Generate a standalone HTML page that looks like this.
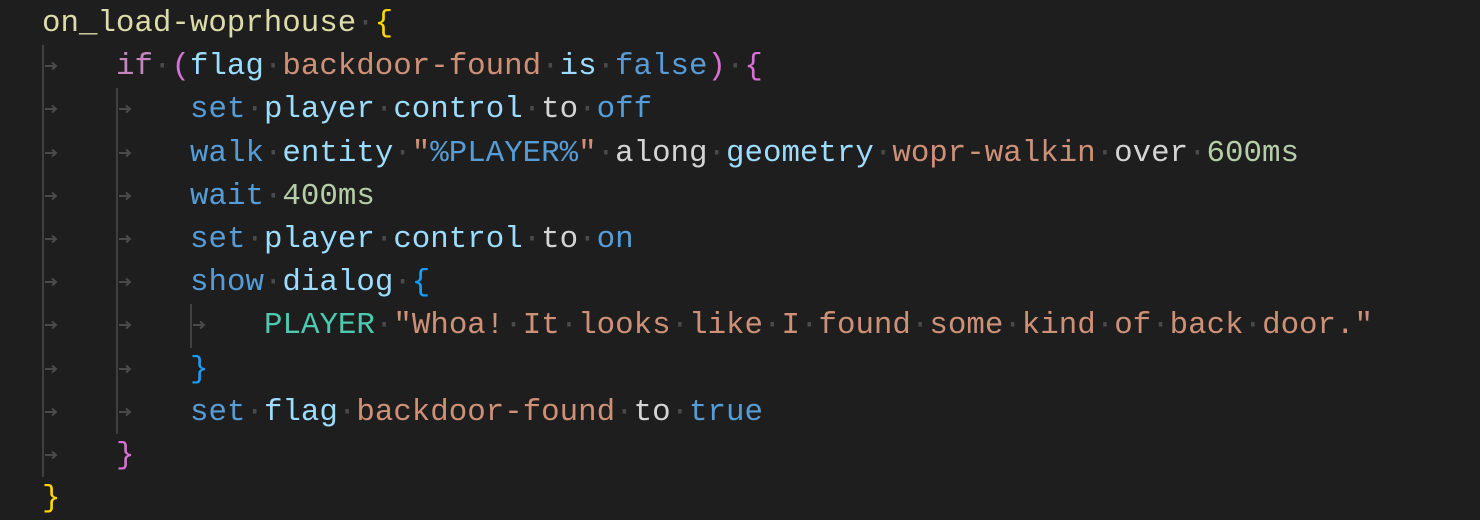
<!DOCTYPE html>
<html><head><meta charset="utf-8"><style>
html,body{margin:0;padding:0;background:#1e1e1e;width:1480px;height:518px;overflow:hidden}
.c{position:absolute;left:42px;top:2px;font-family:"Liberation Mono",monospace;font-size:30.8px;line-height:43.2px;color:#d4d4d4;white-space:nowrap}
.l{height:43.2px}
.t{display:inline-block;width:74px;height:43.2px;vertical-align:top;border-left:2px solid #404040;box-sizing:border-box;position:relative}
.t svg{position:absolute;left:1px;top:15px}
i{font-style:normal;color:#4a4a4a}
.y{color:#dcdcaa}.g{color:#ffd700}.p{color:#c586c0}.o{color:#da70d6}.lb{color:#9cdcfe}.s{color:#ce9178}.k{color:#569cd6}.w{color:#d4d4d4}.m{color:#b5cea8}.b{color:#179fff}.tl{color:#4ec9b0}
</style></head><body>
<div class="c">
<div class="l"><span class="y">on_load-woprhouse</span><i>·</i><span class="g">{</span></div>
<div class="l"><span class="t"><svg width="14" height="12"><path d="M0 6H11M7 2.5L11 6L7 9.5" stroke="#4a4a4a" stroke-width="2" fill="none"/></svg></span><span class="p">if</span><i>·</i><span class="o">(</span><span class="lb">flag</span><i>·</i><span class="s">backdoor-found</span><i>·</i><span class="lb">is</span><i>·</i><span class="k">false</span><span class="o">)</span><i>·</i><span class="o">{</span></div>
<div class="l"><span class="t"><svg width="14" height="12"><path d="M0 6H11M7 2.5L11 6L7 9.5" stroke="#4a4a4a" stroke-width="2" fill="none"/></svg></span><span class="t"><svg width="14" height="12"><path d="M0 6H11M7 2.5L11 6L7 9.5" stroke="#4a4a4a" stroke-width="2" fill="none"/></svg></span><span class="k">set</span><i>·</i><span class="lb">player</span><i>·</i><span class="lb">control</span><i>·</i><span class="w">to</span><i>·</i><span class="k">off</span></div>
<div class="l"><span class="t"><svg width="14" height="12"><path d="M0 6H11M7 2.5L11 6L7 9.5" stroke="#4a4a4a" stroke-width="2" fill="none"/></svg></span><span class="t"><svg width="14" height="12"><path d="M0 6H11M7 2.5L11 6L7 9.5" stroke="#4a4a4a" stroke-width="2" fill="none"/></svg></span><span class="k">walk</span><i>·</i><span class="lb">entity</span><i>·</i><span class="s">"</span><span class="k">%PLAYER%</span><span class="s">"</span><i>·</i><span class="w">along</span><i>·</i><span class="lb">geometry</span><i>·</i><span class="s">wopr-walkin</span><i>·</i><span class="w">over</span><i>·</i><span class="m">600ms</span></div>
<div class="l"><span class="t"><svg width="14" height="12"><path d="M0 6H11M7 2.5L11 6L7 9.5" stroke="#4a4a4a" stroke-width="2" fill="none"/></svg></span><span class="t"><svg width="14" height="12"><path d="M0 6H11M7 2.5L11 6L7 9.5" stroke="#4a4a4a" stroke-width="2" fill="none"/></svg></span><span class="k">wait</span><i>·</i><span class="m">400ms</span></div>
<div class="l"><span class="t"><svg width="14" height="12"><path d="M0 6H11M7 2.5L11 6L7 9.5" stroke="#4a4a4a" stroke-width="2" fill="none"/></svg></span><span class="t"><svg width="14" height="12"><path d="M0 6H11M7 2.5L11 6L7 9.5" stroke="#4a4a4a" stroke-width="2" fill="none"/></svg></span><span class="k">set</span><i>·</i><span class="lb">player</span><i>·</i><span class="lb">control</span><i>·</i><span class="w">to</span><i>·</i><span class="k">on</span></div>
<div class="l"><span class="t"><svg width="14" height="12"><path d="M0 6H11M7 2.5L11 6L7 9.5" stroke="#4a4a4a" stroke-width="2" fill="none"/></svg></span><span class="t"><svg width="14" height="12"><path d="M0 6H11M7 2.5L11 6L7 9.5" stroke="#4a4a4a" stroke-width="2" fill="none"/></svg></span><span class="k">show</span><i>·</i><span class="lb">dialog</span><i>·</i><span class="b">{</span></div>
<div class="l"><span class="t"><svg width="14" height="12"><path d="M0 6H11M7 2.5L11 6L7 9.5" stroke="#4a4a4a" stroke-width="2" fill="none"/></svg></span><span class="t"><svg width="14" height="12"><path d="M0 6H11M7 2.5L11 6L7 9.5" stroke="#4a4a4a" stroke-width="2" fill="none"/></svg></span><span class="t"><svg width="14" height="12"><path d="M0 6H11M7 2.5L11 6L7 9.5" stroke="#4a4a4a" stroke-width="2" fill="none"/></svg></span><span class="tl">PLAYER</span><i>·</i><span class="s">"Whoa!<i>·</i>It<i>·</i>looks<i>·</i>like<i>·</i>I<i>·</i>found<i>·</i>some<i>·</i>kind<i>·</i>of<i>·</i>back<i>·</i>door."</span></div>
<div class="l"><span class="t"><svg width="14" height="12"><path d="M0 6H11M7 2.5L11 6L7 9.5" stroke="#4a4a4a" stroke-width="2" fill="none"/></svg></span><span class="t"><svg width="14" height="12"><path d="M0 6H11M7 2.5L11 6L7 9.5" stroke="#4a4a4a" stroke-width="2" fill="none"/></svg></span><span class="b">}</span></div>
<div class="l"><span class="t"><svg width="14" height="12"><path d="M0 6H11M7 2.5L11 6L7 9.5" stroke="#4a4a4a" stroke-width="2" fill="none"/></svg></span><span class="t"><svg width="14" height="12"><path d="M0 6H11M7 2.5L11 6L7 9.5" stroke="#4a4a4a" stroke-width="2" fill="none"/></svg></span><span class="k">set</span><i>·</i><span class="lb">flag</span><i>·</i><span class="s">backdoor-found</span><i>·</i><span class="w">to</span><i>·</i><span class="k">true</span></div>
<div class="l"><span class="t"><svg width="14" height="12"><path d="M0 6H11M7 2.5L11 6L7 9.5" stroke="#4a4a4a" stroke-width="2" fill="none"/></svg></span><span class="o">}</span></div>
<div class="l"><span class="g">}</span></div>
</div>
</body></html>
